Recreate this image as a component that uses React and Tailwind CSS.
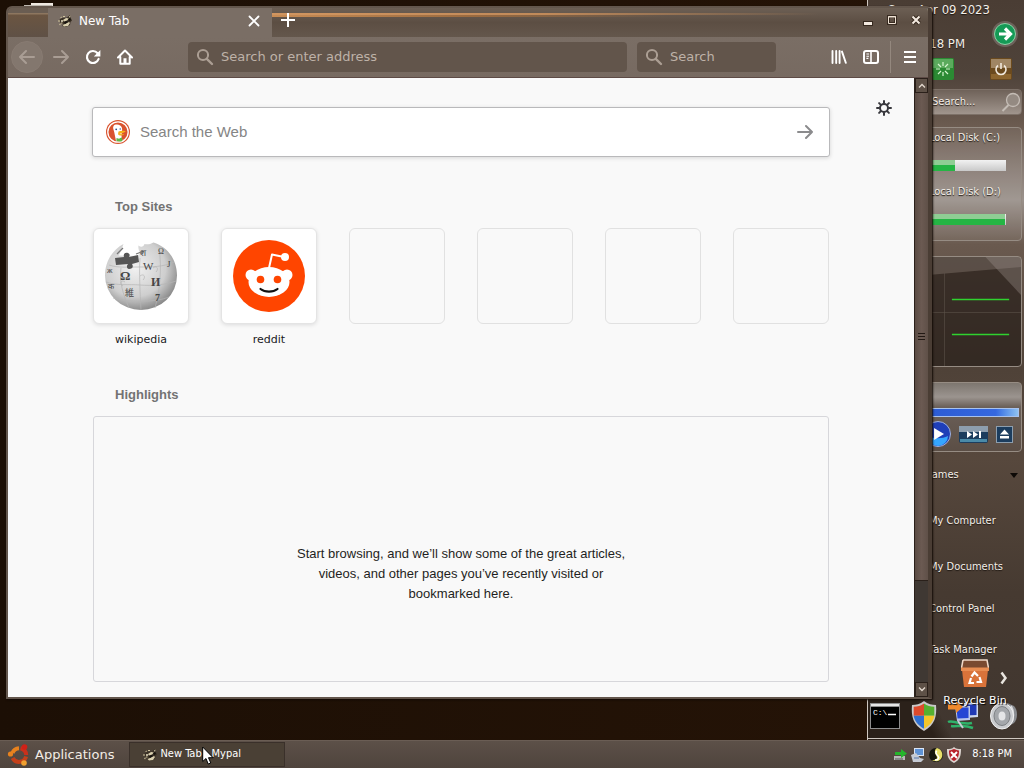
import React from "react";

const UI = "font-['DejaVu_Sans',sans-serif]";
const COND = "font-['DejaVu_Sans_Condensed','DejaVu_Sans',sans-serif]";

/* ---------- icons ---------- */

function RaccoonIcon() {
  return (
    <svg viewBox="0 0 16 16" className="size-4 shrink-0" aria-hidden="true">
      <path d="M2.500 6.500 5 5l5-.5L13 2l1 3.500 1 2-1.500 1.500L13 12l-4 2-4-1 1-2-2.500-1z" fill="#3b3226" />
      <path d="M6 7l3-2 3 .5-2 2-3 1zM12 3.500l1.500-1-.5 2.500zM8 11l4-2 1 1-2 3-4 .5-1.500-1.500z" fill="#d9cfae" />
      <path d="M3 4.500l2-1-.5 1.500zM1 7.500h2v1H1zM2 11l2-.5-1 2zM6 3h2v1H6zM4 9.500h1.500v1H4z" fill="#cfc39c" />
      <path d="M7 9l3-1 1 1-3 2zM11 6l2-1 1 2-2 1z" fill="#14110d" />
      <circle cx="5" cy="8" r="1" fill="#e8dfc4" />
    </svg>
  );
}

function Magnifier() {
  return (
    <svg viewBox="0 0 18 18" className="size-[18px] shrink-0" fill="none" stroke="#ab9e93" aria-hidden="true">
      <circle cx="7" cy="7" r="5.1" strokeWidth="2" />
      <path d="M10.8 10.8 16 16" strokeWidth="2.4" strokeLinecap="round" />
    </svg>
  );
}

function ArrowIcon({ flip, color }) {
  return (
    <svg viewBox="0 0 16 16" className={flip ? "size-4 rotate-180" : "size-4"} fill="none" stroke={color} strokeWidth="2" strokeLinecap="round" strokeLinejoin="round" aria-hidden="true">
      <path d="M1 8h14M9 2l6 6-6 6" />
    </svg>
  );
}

function ReloadIcon() {
  return (
    <svg viewBox="0 0 16 16" className="size-4" fill="none" stroke="#fff" strokeWidth="2.2" aria-hidden="true">
      <path d="M13.6 10A6 6 0 1 1 12.6 4.2" strokeLinecap="round" />
      <path d="M15.4 1v6.6H8.8z" fill="#fff" stroke="none" />
    </svg>
  );
}

function HomeIcon() {
  return (
    <svg viewBox="0 0 16 16" className="size-4" fill="none" stroke="#fff" strokeWidth="2" strokeLinecap="round" strokeLinejoin="round" aria-hidden="true">
      <path d="M1 8.5 8 1.5l7 7M3.3 8v6.8h9.4V8" />
      <path d="M8 9.3v5" strokeWidth="3" strokeLinecap="butt" />
    </svg>
  );
}

function LibraryIcon() {
  return (
    <svg viewBox="0 0 16 16" className="size-4" fill="none" stroke="#fff" strokeWidth="1.9" strokeLinecap="round" aria-hidden="true">
      <path d="M1.500 2v12M5.200 2v12M8.600 2v12M11 2.600l3.800 11.200" />
    </svg>
  );
}

function SidebarIcon() {
  return (
    <svg viewBox="0 0 16 16" className="size-4" fill="none" stroke="#fff" aria-hidden="true">
      <rect x="1" y="2" width="14" height="12" rx="2" strokeWidth="2" />
      <path d="M8 2v12" strokeWidth="1.6" />
      <path d="M3.4 5h2.6M3.4 7.2h2.6M3.4 9.4h2" strokeWidth="1.1" />
    </svg>
  );
}

function GearIcon() {
  return (
    <svg viewBox="0 0 16 16" className="size-4" fill="none" stroke="#38383d" strokeWidth="2" strokeLinecap="round" aria-hidden="true">
      <circle cx="8" cy="8" r="4" strokeWidth="2" />
      <path d="M8 1v2M8 13v2M1 8h2M13 8h2M3.1 3.1l1.3 1.3M11.6 11.6l1.3 1.3M12.9 3.1l-1.3 1.3M4.4 11.6l-1.3 1.3" />
    </svg>
  );
}

function DuckIcon() {
  return (
    <svg viewBox="0 0 24 24" className="size-6 shrink-0" aria-hidden="true">
      <circle cx="12" cy="12" r="12" fill="#d9532f" />
      <circle cx="12" cy="12" r="10.200" fill="none" stroke="#fff" strokeWidth="1.300" />
      <path d="M7.500 6C8.500 4.400 12 4 14.200 5.500c2.200 1.400 2.200 3.800 1.800 6.300l-.6 3.700 1 5.400c-2.200.8-4.400.7-6.400 0L8.200 12C7.600 9.500 6.500 8 7.500 6z" fill="#fff" />
      <path d="M12.500 11.500c2-.8 5-.9 7.300-.2-1 1.400-3.300 1.700-6.200 2.400 1.500.6 3 .6 4.600.5-1 1.500-5.200 1.700-6.200 0z" fill="#f6b21b" />
      <path d="M10.500 18l2.500.8 2.800-1.600.6 3.700c-2 .7-4 .7-6 .1z" fill="#5fb946" />
      <circle cx="10.200" cy="9.300" r=".9" fill="#2d4f8e" />
      <circle cx="14.200" cy="9" r=".7" fill="#2d4f8e" />
    </svg>
  );
}

function WikipediaGlobe() {
  return (
    <svg viewBox="0 0 72 72" className="size-18" aria-hidden="true">
      <defs>
        <radialGradient id="globe" cx="42%" cy="38%" r="65%">
          <stop offset="0" stopColor="#f1f1f1" />
          <stop offset=".65" stopColor="#cecece" />
          <stop offset="1" stopColor="#858585" />
        </radialGradient>
      </defs>
      <path d="M18.500 4c-1.500 4-3 8-4.500 11.500l18 .5 3-2.500c-1-3-2-5-1.500-8 2.500 2 5 1.500 6-1.500 4 1 7-.5 9-1.500C63 7 72 20 72 35.500a36 34.500 0 0 1-72 0C0 22 7 10 18.500 4z" fill="url(#globe)" />
      <g fill="none" stroke="#b4b4b4" strokeWidth=".7">
        <path d="M4 25c9 3 18 2 30 2s25 0 35-5M1 42c12 4 22 2 34 3s25 0 36-4M8 58c14 4 42 5 56-1M35 18c-1 12 0 35 1 52M16 28c-2 14 2 26 8 40M54 8c3 20 1 42-4 60M35 36c4-3 6 1 3 4M20 42c-4-3-6 2-2 4M48 28c4-3 6 1 3 4" />
      </g>
      <path d="M10 18l9-1c-1-3 1-5 4-4 2 1 2 2 1 4l9-2 1 7-7 2c2 3 0 5-3 5-2 0-3-3-1-5l-12 1z" fill="#555" />
      <path d="M12 14l6-6M31 14l8-3" stroke="#777" strokeWidth="1.300" />
      <g fill="#454545" fontFamily="Liberation Serif, serif" fontSize="13">
        <text x="15" y="40" fontWeight="bold">Ω</text>
        <text x="38" y="30" fontSize="11">W</text>
        <text x="46" y="46" fontSize="12" fontWeight="bold">И</text>
        <text x="20" y="56" fontSize="9" fontFamily="Noto Sans CJK JP, sans-serif">維</text>
        <text x="50" y="61" fontSize="10" fontWeight="bold">7</text>
        <text x="62" y="27" fontSize="9">Ј</text>
        <text x="2" y="33" fontSize="8">ж</text>
        <text x="3" y="49" fontSize="8">क</text>
        <text x="53" y="14" fontSize="8">Ω</text>
        <text x="35" y="16" fontSize="9">श</text>
      </g>
    </svg>
  );
}

function RedditIcon() {
  return (
    <svg viewBox="0 0 72 72" className="size-18" aria-hidden="true">
      <circle cx="36" cy="36" r="36" fill="#ff4500" />
      <path d="M36 28l3-13.500 12 2.500" fill="none" stroke="#fff" strokeWidth="2" strokeLinejoin="round" strokeLinecap="round" />
      <circle cx="52" cy="17" r="4" fill="#fff" />
      <circle cx="18" cy="35" r="5.500" fill="#fff" />
      <circle cx="54" cy="35" r="5.500" fill="#fff" />
      <ellipse cx="36" cy="42" rx="20.500" ry="15" fill="#fff" />
      <circle cx="27.500" cy="39.500" r="3.800" fill="#ff4500" />
      <circle cx="44.500" cy="39.500" r="3.800" fill="#ff4500" />
      <path d="M27.500 49c4.500 3.600 12.500 3.600 17 0" fill="none" stroke="#111" strokeWidth="2.200" strokeLinecap="round" />
    </svg>
  );
}

function UbuntuIcon() {
  return (
    <svg viewBox="0 0 24 24" className="size-6 shrink-0" fill="none" aria-hidden="true">
      <g strokeWidth="4">
        <path d="M5.500 10A7.300 7.300 0 0 1 12 5.200" stroke="#e8821e" />
        <path d="M13.500 5.300A7.300 7.300 0 0 1 19.200 12" stroke="#c9301c" />
        <path d="M19.100 13.500A7.300 7.300 0 0 1 5.600 15" stroke="#c4401a" />
      </g>
      <circle cx="3.500" cy="11" r="2.600" fill="#e8821e" />
      <circle cx="17.500" cy="4" r="2.800" fill="#cf2118" />
      <circle cx="17" cy="20" r="2.800" fill="#f0a030" />
    </svg>
  );
}

/* ---------- browser window ---------- */

function ToolButton({ label, children, className = "" }) {
  return (
    <button type="button" aria-label={label} className={"flex size-8 shrink-0 items-center justify-center " + className}>
      {children}
    </button>
  );
}

function TitleBar() {
  return (
    <header className="flex h-[29px] shrink-0 bg-linear-to-b from-[#6c5f54] via-[#5c4e43] to-[#64574c]">
      <div className="w-10 shrink-0 bg-[linear-gradient(#6a5d52_5px,#8d765f_5px,#8d765f_6px,#6b5541_7px,#5f5146)]" />
      <div className="flex w-56 shrink-0 items-center bg-[#7a6e65] pr-2.5 pb-[3px] pl-[9px]">
        <RaccoonIcon />
        <span className={UI + " ml-1.5 grow text-xs text-white"}>New Tab</span>
        <button type="button" aria-label="Close tab" className="flex size-4 items-center justify-center">
          <svg viewBox="0 0 12 12" className="size-3" stroke="#fff" strokeWidth="1.800" strokeLinecap="round">
            <path d="M1.500 1.500l9 9M10.500 1.500l-9 9" />
          </svg>
        </button>
      </div>
      <div className="relative flex grow items-start">
        <div className="absolute inset-x-0 top-[5px] h-[2px] w-5/6 bg-linear-to-r from-[#d09560] via-[#c08a5a] to-transparent" />
        <div className="absolute left-0 top-[7px] h-[2px] w-3/5 bg-linear-to-r from-[#c98d55] via-[#9b6b40] to-transparent" />
        <button type="button" aria-label="New tab" className="relative ml-2 flex h-6 w-4 items-center justify-center">
          <svg viewBox="0 0 14 14" className="size-3.5 shrink-0" stroke="#fff" strokeWidth="2">
            <path d="M7 0v14M0 7h14" />
          </svg>
        </button>
        <div className="ml-auto flex">
          <button type="button" aria-label="Minimize" className="flex size-6 items-center justify-center">
            <svg viewBox="0 0 12 12" className="size-3">
              <path d="M1 7h10v5H1z" fill="#372a20" />
              <path d="M2 8h8v3H2z" fill="#f3e9df" />
            </svg>
          </button>
          <button type="button" aria-label="Maximize" className="flex size-6 items-center justify-center">
            <svg viewBox="0 0 12 12" className="size-3" fill="none">
              <path d="M2.500 2.500h7v7h-7z" stroke="#372a20" strokeWidth="3" />
              <path d="M2.500 2.500h7v7h-7z" stroke="#efe2d4" />
              <path d="M2 3h8" stroke="#efe2d4" />
            </svg>
          </button>
          <button type="button" aria-label="Close" className="flex size-6 items-center justify-center">
            <svg viewBox="0 0 12 12" className="size-3" fill="none">
              <path d="M2.500 2.500l7 7M9.500 2.500l-7 7" stroke="#372a20" strokeWidth="4" />
              <path d="M2.500 2.500l7 7M9.500 2.500l-7 7" stroke="#f3e9df" strokeWidth="2" />
            </svg>
          </button>
        </div>
      </div>
    </header>
  );
}

function NavBar() {
  const field = "flex h-[30px] items-center gap-[7px] rounded-sm bg-[#62554b] pl-2";
  const input = UI + " w-full min-w-0 bg-transparent text-[13px] text-white outline-none placeholder:text-[#beb2a8]";
  return (
    <nav className="flex h-[41px] shrink-0 items-center border-b border-[#5d4a45] bg-linear-to-b from-[#7a6e65] to-[#776a61] pl-[3px] pr-0.5">
      <ToolButton label="Back" className="mr-0.5 rounded-full border border-[#887b72] bg-[#83776e]">
        <ArrowIcon flip color="#a99d94" />
      </ToolButton>
      <ToolButton label="Forward"><ArrowIcon color="#a99d94" /></ToolButton>
      <ToolButton label="Reload"><ReloadIcon /></ToolButton>
      <ToolButton label="Home"><HomeIcon /></ToolButton>
      <label className={field + " ml-[47px] grow"}>
        <Magnifier />
        <input type="text" aria-label="Address" placeholder="Search or enter address" className={input} />
      </label>
      <label className={field + " ml-2.5 mr-[47px] w-[139px] shrink-0"}>
        <Magnifier />
        <input type="text" aria-label="Search" placeholder="Search" className={input} />
      </label>
      <ToolButton label="Library"><LibraryIcon /></ToolButton>
      <ToolButton label="Sidebars"><SidebarIcon /></ToolButton>
      <div className="mx-[3px] h-8 w-px shrink-0 bg-[#94887e]" />
      <ToolButton label="Menu">
        <svg viewBox="0 0 12 12" className="size-3" stroke="#fff" strokeWidth="2">
          <path d="M0 1h12M0 6h12M0 11h12" />
        </svg>
      </ToolButton>
    </nav>
  );
}

function TopSite({ name, icon }) {
  return (
    <li>
      <a href={"#" + name} className="flex flex-col items-center">
        <span className="flex size-24 items-center justify-center rounded-md border border-[#e4e4e4] bg-white shadow-[0_1px_4px_rgba(12,12,13,0.12)]">
          {icon}
        </span>
        <span className={UI + " mt-2 text-[11px] leading-4 text-[#1a1a1c]"}>{name}</span>
      </a>
    </li>
  );
}

function NewTabPage() {
  const heading = "px-[22px] text-[13px] leading-5 font-bold text-[#737373]";
  return (
    <main className="relative grow overflow-hidden bg-[#f9f9f9] font-['Liberation_Sans',sans-serif]">
      <button type="button" aria-label="Preferences" className="absolute top-[22px] right-[22px]">
        <GearIcon />
      </button>
      <div className="mx-auto flex h-full max-w-[738px] flex-col px-px pt-[29px] pb-[15px]">
        <label className="-mx-px flex h-[50px] shrink-0 items-center rounded-[3px] border border-[#b9b9bb] bg-white px-[13px] shadow-[0_1px_4px_rgba(12,12,13,0.15)]">
          <DuckIcon />
          <input type="text" aria-label="Search the Web" placeholder="Search the Web" className="ml-2.5 min-w-0 grow bg-transparent text-[15px] outline-none placeholder:text-[#858585]" />
          <button type="button" aria-label="Submit search" className="mr-[3px]"><ArrowIcon color="#8b8b8d" /></button>
        </label>

        <h2 className={heading + " mt-10"}>Top Sites</h2>
        <ul className="mt-[11px] flex justify-between">
          <TopSite name="wikipedia" icon={<WikipediaGlobe />} />
          <TopSite name="reddit" icon={<RedditIcon />} />
          {[1, 2, 3, 4].map((n) => (
            <li key={n} className="size-24 rounded-md border border-[#e1e1e1]" />
          ))}
        </ul>

        <h2 className={heading + " mt-[37px]"}>Highlights</h2>
        <section className="mt-[11px] flex grow items-center justify-center rounded-[3px] border border-[#d7d7db] pt-[50px]">
          <p className="w-[340px] text-center text-[13px] leading-5 text-[#1f1f22]">
            Start browsing, and we’ll show some of the great articles, videos, and other pages you’ve recently visited or bookmarked here.
          </p>
        </section>
      </div>
    </main>
  );
}

function ScrollBar() {
  const arrow = "flex h-[15px] shrink-0 items-center justify-center border border-[#2a201a] bg-[#5e5147]";
  return (
    <div className="flex w-3.5 shrink-0 flex-col border-l border-[#2a201a] bg-[#3f3833]">
      <button type="button" aria-label="Scroll up" className={arrow}>
        <svg viewBox="0 0 8 5" className="h-[5px] w-2" fill="none" stroke="#e4d9cf" strokeWidth="1.300"><path d="M1 4.500l3-3 3 3" /></svg>
      </button>
      <div className="flex h-[488px] items-center justify-center border-b border-[#2a201a] bg-linear-to-r from-[#5a4b44] via-[#6b5a52] to-[#5f5048]">
        <div className="flex w-[7px] flex-col gap-0.5">
          <i className="h-px bg-[#221914]" /><i className="h-px bg-[#221914]" /><i className="h-px bg-[#221914]" />
        </div>
      </div>
      <button type="button" aria-label="Scroll down" className={arrow + " mt-auto"}>
        <svg viewBox="0 0 8 5" className="h-[5px] w-2" fill="none" stroke="#e4d9cf" strokeWidth="1.300"><path d="M1 .5l3 3 3-3" /></svg>
      </button>
    </div>
  );
}

function BrowserWindow() {
  return (
    <div className="absolute top-1.5 right-[92px] bottom-[41px] left-1.5 flex flex-col overflow-hidden rounded-t-md border-2 border-r-4 border-[#63564c] border-r-[#4a3d34] shadow-[1px_1px_2px_#120a05]">
      <TitleBar />
      <NavBar />
      <div className="flex min-h-0 grow">
        <NewTabPage />
        <ScrollBar />
      </div>
    </div>
  );
}

/* ---------- desktop side panel ---------- */

const SHADOW = "text-[#f4efe9] [text-shadow:0_1px_1px_#1d1611]";

function Gauge({ label, fill }) {
  return (
    <div className="flex flex-col">
      <span className={"pl-[60px] text-[11px] leading-5 " + COND + " " + SHADOW}>{label}</span>
      <div className="mt-3 mr-[15px] h-[11px] bg-linear-to-b from-[#f2f2f2] to-[#c9c9c9]">
        <div className="h-full bg-[linear-gradient(#8fce94_50%,#25b544_50%)]" style={{ width: fill + "%" }} />
      </div>
    </div>
  );
}

function SidePanel() {
  const panel = "mr-0.5 rounded-sm border border-[#968c83]";
  return (
    <aside className={"flex w-[157px] shrink-0 flex-col border-l border-[#cfc8c1] bg-[linear-gradient(62deg,#2b211a_60px,transparent_76px),linear-gradient(#4a3d34,#4f433a_10%,#6b5b50_17%,#857870_22%,#9b928c_27%,#6a5a4f_33%,#4f4238_50%,#57483d_62%,#463a31_80%,#40362f)] " + COND}>
      <div className={"h-5 pr-[34px] text-right text-[13px] leading-5 whitespace-nowrap " + SHADOW}>Sun, Apr 09 2023</div>
      <div className="flex h-9 justify-between pr-[5px]">
        <span className={"w-[97px] self-end text-right text-[13px] leading-6 " + SHADOW}>8:18 PM</span>
        <button type="button" aria-label="Go" className="self-start">
          <svg viewBox="0 0 28 28" className="size-7">
            <circle cx="14" cy="14" r="13" fill="#b9b3ae" opacity=".3" />
            <circle cx="14" cy="14" r="10.500" fill="#159a56" stroke="#8fd0a6" />
            <path d="M8 14h9M14 8.500l5.500 5.500-5.500 5.500" fill="none" stroke="#fff" strokeWidth="3.200" />
          </svg>
        </button>
      </div>
      <div className="flex justify-between pt-0.5 pr-3 pl-16">
        <button type="button" aria-label="Restart">
          <svg viewBox="0 0 22 22" className="size-[22px]">
            <rect width="22" height="22" rx="2" fill="#2b8a33" />
            <path d="M1 1h20v9H1z" fill="#7cbf79" opacity=".6" />
            <path d="M11 4v4M11 14v4M4 11h4M14 11h4M6 6l3 3M13 13l3 3M16 6l-3 3M9 13l-3 3" stroke="#d5f5cf" strokeWidth="1.200" />
          </svg>
        </button>
        <button type="button" aria-label="Shut down">
          <svg viewBox="0 0 22 22" className="size-[22px]">
            <rect width="22" height="22" rx="2" fill="#6b4a1e" />
            <path d="M1 1h20v9H1z" fill="#b29b7c" opacity=".75" />
            <path d="M1 16h20v5H1z" fill="#9a7135" opacity=".7" />
            <path d="M8 7.500a5 5 0 1 0 6 0M11 5v6" fill="none" stroke="#f0e8dc" strokeWidth="1.600" />
          </svg>
        </button>
      </div>
      <label className="mt-[9px] mr-0.5 flex h-[26px] items-center rounded-sm border border-[#7d7168] bg-linear-to-b from-[#6f6259] to-[#a0958d] pl-[63px]">
        <input type="text" aria-label="Search computer" placeholder="Search..." className={"w-0 grow bg-transparent text-[11px] outline-none placeholder:text-[#f4efe9] " + SHADOW} />
        <svg viewBox="0 0 20 20" className="size-5 shrink-0" fill="none" stroke="#c4bcb5">
          <circle cx="12" cy="8" r="6.500" strokeWidth="1.300" fill="#948a82" />
          <path d="M7.500 13 1.500 19" strokeWidth="2" />
        </svg>
      </label>
      <div className={panel + " mt-3 h-[114px] bg-white/5"}>
        <Gauge label="Local Disk (C:)" fill={63} />
        <div className="h-[11px]" />
        <Gauge label="Local Disk (D:)" fill={99} />
      </div>
      <div className={panel + " mt-[15px] h-[111px] bg-[#2b221c]/75"}>
        <svg viewBox="0 0 154 109" className="h-full w-full" preserveAspectRatio="none">
          <path d="M0 20l60-2 94-8V0H0z" fill="#8b7f76" opacity=".4" />
          <path d="M118 0l36 38V0z" fill="#a0968e" opacity=".35" />
          <path d="M0 55.500h154M76.500 16v93" stroke="#5c5149" strokeWidth=".6" />
          <path d="M84 42.500h58M84 77.500h58" stroke="#2fd22f" strokeWidth="1.300" />
        </svg>
      </div>
      <div className={panel + " mt-[15px] flex h-[70px] flex-col bg-[linear-gradient(#7d766f,#9b948f_14px,#6b6059_24px,#5b4e45)]"}>
        <div className="mt-[25px] mr-0.5 h-[9px] border border-[#a8c2ee] bg-linear-to-r from-[#2450c8] via-[#3568e0] via-85% to-[#8fc2f2]" />
        <div className="flex items-center justify-end gap-2 pt-1 pr-[8px]">
          <button type="button" aria-label="Play">
            <svg viewBox="0 0 26 26" className="size-[26px]">
              <circle cx="13" cy="13" r="12.500" fill="#1f3fb8" stroke="#9fb1dc" />
              <path d="M3 15a10 10 0 0 0 20 0c-6 3-14 3-20 0z" fill="#35a6ff" />
              <path d="M9 7v12l10-6z" fill="#fff" />
            </svg>
          </button>
          <button type="button" aria-label="Next track">
            <svg viewBox="0 0 29 17" className="h-[17px] w-[29px]">
              <rect width="29" height="17" rx="2" fill="#1c3d5e" />
              <path d="M0 0h29v6H0z" fill="#8d9eae" /><path d="M1 13h27v3H1z" fill="#4a8aa8" />
              <path d="M8 5v7l5-3.500zM14 5v7l5-3.500zM20 5h2v7h-2z" fill="#fff" />
            </svg>
          </button>
          <button type="button" aria-label="Eject">
            <svg viewBox="0 0 17 17" className="size-[17px]">
              <rect x=".5" y=".5" width="16" height="16" fill="#1c3d5e" stroke="#8d9eae" />
              <path d="M4 8.500h9l-4.500-5zM4 10h9v2.500H4z" fill="#fff" />
            </svg>
          </button>
        </div>
      </div>
      <ul className={"text-[11px] " + SHADOW}>
        <li>
          <a href="#games" className="flex h-[46px] items-center justify-between pr-1.5 pl-[56px]">
            Games
            <svg viewBox="0 0 8 5" className="h-[5px] w-2"><path d="M0 0h8L4 5z" fill="#0d0906" /></svg>
          </a>
        </li>
        <li><a href="#computer" className="flex h-[46px] items-center pl-[61px]">My Computer</a></li>
        <li><a href="#documents" className="flex h-[46px] items-center pl-[61px]">My Documents</a></li>
        <li><a href="#control" className="flex h-[38px] items-center pl-[61px]">Control Panel</a></li>
        <li><a href="#tasks" className="flex h-11 items-center pl-[61px]">Task Manager</a></li>
      </ul>
      <Dock />
    </aside>
  );
}

function Dock() {
  return (
    <div className="mt-auto mb-px flex h-[38px] items-start justify-between border-b border-[#cfc8c1] pr-1.5 pl-0.5">
      <button type="button" aria-label="Command prompt">
        <svg viewBox="0 0 30 26" className="mt-0.5 h-[26px] w-[30px]">
          <path d="M0 0h30v26H0z" fill="#8e8e8e" /><path d="M1 1h28v2H1z" fill="#e6e6e6" /><path d="M1 4h28v21H1z" fill="#000" />
          <text x="3" y="12" fill="#fff" fontSize="8" fontFamily="Liberation Mono, monospace">C:\</text>
          <path d="M18 11.500h8" stroke="#fff" strokeWidth="1.500" />
        </svg>
      </button>
      <button type="button" aria-label="Security center">
        <svg viewBox="0 0 26 30" className="h-[30px] w-[26px]">
          <path d="M13 0c4 3 8 4 12 4 1 11-1 20-12 26C2 24 0 15 1 4c4 0 8-1 12-4z" fill="#c9c9c9" />
          <path d="M13 2.500v12.300H2.700L2.700 5.800c4 0 7-1 10.300-3.300z" fill="#dd4a2c" />
          <path d="M13 2.500v12.300h10.300l0-9c-4 0-7-1-10.300-3.300z" fill="#55b030" />
          <path d="M13 14.800v13C7 24.500 3.500 20 2.700 14.800z" fill="#2f6fd0" />
          <path d="M13 14.800v13c6-3.300 9.500-7.800 10.300-13z" fill="#f4c62a" />
        </svg>
      </button>
      <button type="button" aria-label="Network">
        <svg viewBox="0 0 32 30" className="h-[30px] w-8">
          <path d="M17 2h14v14l-12 1z" fill="#cfd8ee" /><path d="M18.500 3.500h11v10.500l-11 .5z" fill="#2039b5" />
          <path d="M8 5h15v14l-13 1z" fill="#b9c6ea" /><path d="M9.500 6.500h12v10.500l-11 .5z" fill="#2445d4" />
          <path d="M1 3.500h8V0l7 6-7 6V8.500H1z" fill="#f08a2c" />
          <path d="M1 21c4-2 7 1 12 1s8 1 12 0M4 25c6 1 12-2 22 2" fill="none" stroke="#2fb36a" strokeWidth="2.500" />
          <path d="M11 20l5 7" stroke="#c8ccd4" strokeWidth="2" />
        </svg>
      </button>
      <button type="button" aria-label="Volume">
        <svg viewBox="0 0 28 30" className="h-[30px] w-7">
          <path d="M15 1l9 4c4 4 4 13 0 17l-8 5z" fill="#8a8c90" />
          <path d="M21 5c3 5 3 13 0 17" fill="none" stroke="#d9dadd" strokeWidth="2" />
          <ellipse cx="12" cy="15" rx="11.500" ry="13" fill="#c9cbce" stroke="#f2f2f2" />
          <ellipse cx="12" cy="15" rx="8" ry="9.500" fill="#a4a7ab" stroke="#7d8084" />
          <ellipse cx="12" cy="15" rx="3.500" ry="4.500" fill="#e4e5e7" />
        </svg>
      </button>
    </div>
  );
}

function RecycleBin() {
  return (
    <a href="#recycle-bin" className="absolute right-4 bottom-[31px] flex w-[66px] flex-col items-center">
      <svg viewBox="0 0 28 30" className="h-[30px] w-7">
        <path d="M2 1h24l2 9H0z" fill="#7a4a30" />
        <path d="M2 1h24l1.500 8M2 1L.5 9" fill="none" stroke="#f0d9c8" strokeWidth="1.500" />
        <path d="M1 11h26l-2 17H3z" fill="#d9733a" /><path d="M0 8.500h28V12H0z" fill="#e88d52" />
        <g fill="none" stroke="#fff" strokeWidth="2.200">
          <path d="M10.500 17.500l3-4 3.500 3.500M18.500 18l1.500 5h-4.500M13 24H8.500l1.500-5" />
        </g>
      </svg>
      <span className={"mt-1 text-[11px] leading-4 whitespace-nowrap text-white [text-shadow:1px_1px_1px_#000] " + UI}>Recycle Bin</span>
    </a>
  );
}

/* ---------- taskbar ---------- */

function Tray() {
  return (
    <div className="ml-auto flex items-center gap-0.5 pr-3">
      <svg viewBox="0 0 16 16" className="size-4"><path d="M2 9h11v4H2z" fill="#b9b9b9" /><path d="M3 5h6V2l6 4.500L9 11V8H3z" fill="#25b52c" /><path d="M3 12h8" stroke="#555" /></svg>
      <svg viewBox="0 0 16 16" className="size-4"><path d="M4 1h10v8H4z" fill="#dbe5f4" /><path d="M5 2h8v6H5z" fill="#5f93d6" /><path d="M1 8l5-2 4 5 4 1-3 3H3z" fill="#c6cbd4" /><path d="M4 11h5" stroke="#5577aa" /></svg>
      <svg viewBox="0 0 16 16" className="size-4"><circle cx="8" cy="8" r="7" fill="#17170f" /><path d="M9 1a7 7 0 0 1 3 12c-3 2-6 1-8 0 5 0 6-2 4-5S7 2 9 1z" fill="#e8e06a" /><path d="M9 4c-2 1-1 3 1 5s0 4-3 4" fill="none" stroke="#fff" strokeWidth="1.500" /></svg>
      <svg viewBox="0 0 16 16" className="size-4"><path d="M8 0c2 2 4 2 7 2 0 7-1 11-7 14C2 13 1 9 1 2c3 0 5 0 7-2z" fill="#ddd5d0" /><path d="M8 2c2 1 3 1 5 1.500C13 9 12 12 8 14 4 12 3 9 3 3.500 5 3 6 3 8 2z" fill="#b8202a" /><path d="M5 5l6 6M11 5l-6 6" stroke="#fff" strokeWidth="2" /></svg>
      <time className={"ml-2 text-[11px] text-white " + COND}>8:18 PM</time>
    </div>
  );
}

function Taskbar() {
  return (
    <footer className="flex h-7 shrink-0 items-center border-t border-[#6a5d54] bg-linear-to-b from-[#5c5048] to-[#4f443d]">
      <button type="button" className={"flex items-center gap-1 pl-[7px] text-[13px] text-[#f3ede6] " + UI}>
        <UbuntuIcon />
        Applications
      </button>
      <button type="button" className={"ml-[15px] flex h-[25px] w-[156px] items-center gap-0.5 border border-[#3a302a] bg-[#4a4035] pl-3 text-[11px] text-white " + COND}>
        <RaccoonIcon />
        New Tab - Mypal
      </button>
      <Tray />
    </footer>
  );
}

export default function App() {
  return (
    <div className="relative flex min-h-screen flex-col bg-[#1f1106]">
      <div className="relative flex grow justify-end overflow-hidden bg-linear-to-r from-[#1c0f05] to-[#261407]">
        <div className="absolute top-[3px] left-[31px] h-1 w-[22px] bg-[#efe9e2]" />
        <div className="absolute top-[5px] left-[24px] h-px w-7 bg-[#c9c2ba]" />
        <SidePanel />
        <RecycleBin />
        <svg viewBox="0 0 8 14" className="absolute right-4 bottom-[55px] h-3.5 w-2" fill="none" stroke="#e9e5df" strokeWidth="2.500">
          <path d="M1.500 1.500l4 5.500-4 5.500" />
        </svg>
        <BrowserWindow />
      </div>
      <Taskbar />
      <svg viewBox="0 0 12 19" className="absolute bottom-[3px] left-[202px] h-[19px] w-3">
        <path d="M.7 1v14.500l3.300-3 2.200 5.500 2.600-1-2.300-5.300h4.600z" fill="#fff" stroke="#000" />
      </svg>
    </div>
  );
}
